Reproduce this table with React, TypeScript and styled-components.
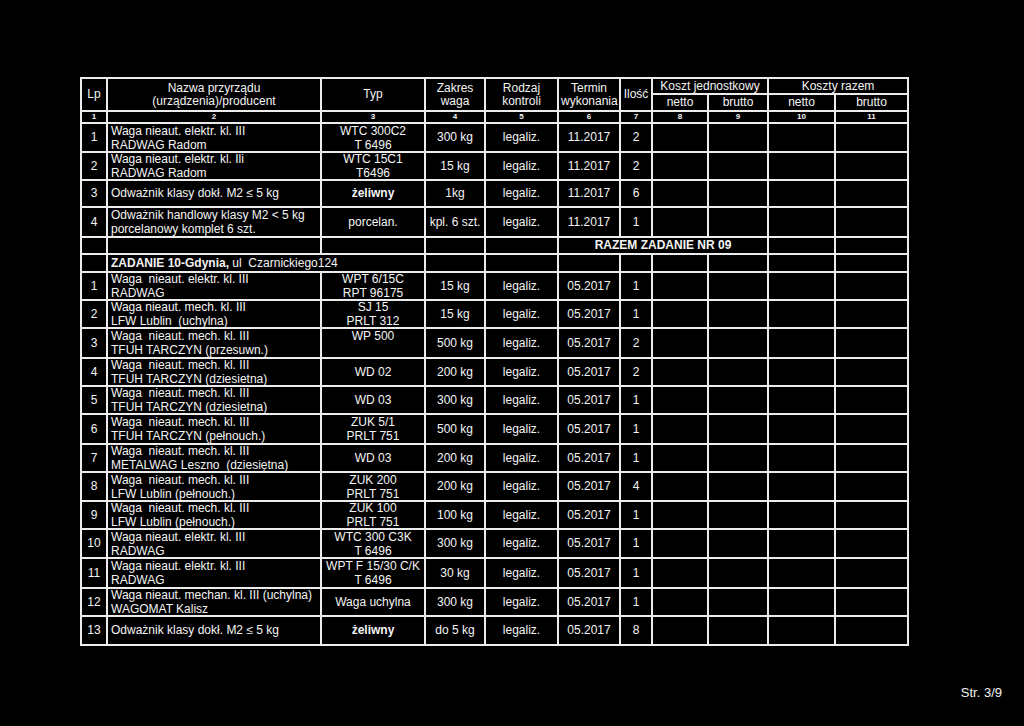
import React from "react";
import styled, { createGlobalStyle } from "styled-components";

const Global = createGlobalStyle`
  html, body { margin: 0; padding: 0; background: #000; }
  body { font-family: "Liberation Sans", Arial, sans-serif; color: #f4f4f4; }
`;

const Page = styled.div`
  width: 1024px;
  height: 726px;
  box-sizing: border-box;
  padding: 77px 0 0 80px;
  background: #000;
  display: flex;
  flex-direction: column;
`;

const Sheet = styled.table`
  border-collapse: collapse;
  table-layout: fixed;
  width: 827px;
  font-size: 12px;
  line-height: 13px;
  color: #f4f4f4;
  td, th { border: 2px solid #ececec; }
`;

const Row = styled.tr<{ $h: number }>`
  height: ${(p) => p.$h}px;
`;

const HeadCell = styled.th`
  font-weight: normal;
  font-size: 12px;
  line-height: 13px;
  text-align: center;
  vertical-align: middle;
  padding: 0 2px;
  white-space: nowrap;
`;

const NumCell = styled.td`
  font-size: 8px;
  line-height: 8px;
  font-weight: bold;
  text-align: center;
  padding: 0;
`;

const Cell = styled.td<{ $align?: "left" | "center"; $bold?: boolean }>`
  text-align: ${(p) => p.$align ?? "center"};
  font-weight: ${(p) => (p.$bold ? "bold" : "normal")};
  vertical-align: middle;
  padding: 0 ${(p) => (p.$align === "left" ? "3px" : "1px")};
  white-space: pre;
  overflow: visible;
`;

const LineStack = styled.div`
  margin: -1px 0;
`;

const Line = styled.div`
  height: 14px;
  line-height: 14px;
  white-space: pre;
`;

const SectionText = styled.span`
  font-weight: bold;
`;

const Footer = styled.div`
  margin-top: 39px;
  padding-right: 22px;
  text-align: right;
  font-size: 13px;
  color: #f4f4f4;
`;

type Item = {
  lp: string;
  name: string[];
  typ: string[];
  typBold?: boolean;
  zakres: string;
  termin: string;
  ilosc: string;
  h: number;
};

const block1: Item[] = [
  { lp: "1", name: ["Waga nieaut. elektr. kl. III", "RADWAG Radom"], typ: ["WTC 300C2", "T 6496"], zakres: "300 kg", termin: "11.2017", ilosc: "2", h: 29 },
  { lp: "2", name: ["Waga nieaut. elektr. kl. Ili", "RADWAG Radom"], typ: ["WTC 15C1", "T6496"], zakres: "15 kg", termin: "11.2017", ilosc: "2", h: 27 },
  { lp: "3", name: ["Odważnik klasy dokł. M2 ≤ 5 kg"], typ: ["żeliwny"], typBold: true, zakres: "1kg", termin: "11.2017", ilosc: "6", h: 27 },
  { lp: "4", name: ["Odważnik handlowy klasy M2 < 5 kg", "porcelanowy komplet 6 szt."], typ: ["porcelan."], zakres: "kpl. 6 szt.", termin: "11.2017", ilosc: "1", h: 30 },
];

const block2: Item[] = [
  { lp: "1", name: ["Waga  nieaut. elektr. kl. III", "RADWAG"], typ: ["WPT 6/15C", "RPT 96175"], zakres: "15 kg", termin: "05.2017", ilosc: "1", h: 28 },
  { lp: "2", name: ["Waga nieaut. mech. kl. III", "LFW Lublin  (uchylna)"], typ: ["SJ 15", "PRLT 312"], zakres: "15 kg", termin: "05.2017", ilosc: "1", h: 28 },
  { lp: "3", name: ["Waga  nieaut. mech. kl. III", "TFUH TARCZYN (przesuwn.)"], typ: ["WP 500", ""], zakres: "500 kg", termin: "05.2017", ilosc: "2", h: 30 },
  { lp: "4", name: ["Waga  nieaut. mech. kl. III", "TFUH TARCZYN (dziesietna)"], typ: ["WD 02"], zakres: "200 kg", termin: "05.2017", ilosc: "2", h: 28 },
  { lp: "5", name: ["Waga  nieaut. mech. kl. III", "TFUH TARCZYN (dziesietna)"], typ: ["WD 03"], zakres: "300 kg", termin: "05.2017", ilosc: "1", h: 27 },
  { lp: "6", name: ["Waga  nieaut. mech. kl. III", "TFUH TARCZYN (pełnouch.)"], typ: ["ZUK 5/1", "PRLT 751"], zakres: "500 kg", termin: "05.2017", ilosc: "1", h: 30 },
  { lp: "7", name: ["Waga  nieaut. mech. kl. III", "METALWAG Leszno  (dziesiętna)"], typ: ["WD 03"], zakres: "200 kg", termin: "05.2017", ilosc: "1", h: 28 },
  { lp: "8", name: ["Waga  nieaut. mech. kl. III", "LFW Lublin (pełnouch.)"], typ: ["ZUK 200", "PRLT 751"], zakres: "200 kg", termin: "05.2017", ilosc: "4", h: 29 },
  { lp: "9", name: ["Waga  nieaut. mech. kl. III", "LFW Lublin (pełnouch.)"], typ: ["ZUK 100", "PRLT 751"], zakres: "100 kg", termin: "05.2017", ilosc: "1", h: 28 },
  { lp: "10", name: ["Waga nieaut. elektr. kl. III", "RADWAG"], typ: ["WTC 300 C3K", "T 6496"], zakres: "300 kg", termin: "05.2017", ilosc: "1", h: 29 },
  { lp: "11", name: ["Waga nieaut. elektr. kl. III", "RADWAG"], typ: ["WPT F 15/30 C/K", "T 6496"], zakres: "30 kg", termin: "05.2017", ilosc: "1", h: 30 },
  { lp: "12", name: ["Waga nieaut. mechan. kl. III (uchylna)", "WAGOMAT Kalisz"], typ: ["Waga uchylna"], zakres: "300 kg", termin: "05.2017", ilosc: "1", h: 28 },
  { lp: "13", name: ["Odważnik klasy dokł. M2 ≤ 5 kg"], typ: ["żeliwny"], typBold: true, zakres: "do 5 kg", termin: "05.2017", ilosc: "8", h: 29 },
];

const widths = [26, 214, 104, 60, 73, 62, 32, 56, 60, 67, 73];

const Lines = ({ lines }: { lines: string[] }) =>
  lines.length === 1 ? (
    <>{lines[0]}</>
  ) : (
    <LineStack>
      {lines.map((l, i) => (
        <Line key={i}>{l}</Line>
      ))}
    </LineStack>
  );

const ItemRow = ({ it }: { it: Item }) => (
  <Row $h={it.h}>
    <Cell>{it.lp}</Cell>
    <Cell $align="left">
      <Lines lines={it.name} />
    </Cell>
    <Cell $bold={it.typBold}>
      <Lines lines={it.typ} />
    </Cell>
    <Cell>{it.zakres}</Cell>
    <Cell>legaliz.</Cell>
    <Cell>{it.termin}</Cell>
    <Cell>{it.ilosc}</Cell>
    <Cell />
    <Cell />
    <Cell />
    <Cell />
  </Row>
);

export default function App() {
  return (
    <>
      <Global />
      <Page>
        <Sheet>
          <colgroup>
            {widths.map((w, i) => (
              <col key={i} style={{ width: w }} />
            ))}
          </colgroup>
          <tbody>
            <Row $h={16}>
              <HeadCell rowSpan={2}>Lp</HeadCell>
              <HeadCell rowSpan={2}>
                Nazwa przyrządu
                <br />
                (urządzenia)/producent
              </HeadCell>
              <HeadCell rowSpan={2}>Typ</HeadCell>
              <HeadCell rowSpan={2}>
                Zakres
                <br />
                waga
              </HeadCell>
              <HeadCell rowSpan={2}>
                Rodzaj
                <br />
                kontroli
              </HeadCell>
              <HeadCell rowSpan={2}>
                Termin
                <br />
                wykonania
              </HeadCell>
              <HeadCell rowSpan={2}>Ilość</HeadCell>
              <HeadCell colSpan={2}>Koszt jednostkowy</HeadCell>
              <HeadCell colSpan={2}>Koszty razem</HeadCell>
            </Row>
            <Row $h={17}>
              <HeadCell>netto</HeadCell>
              <HeadCell>brutto</HeadCell>
              <HeadCell>netto</HeadCell>
              <HeadCell>brutto</HeadCell>
            </Row>
            <Row $h={12}>
              {widths.map((_, i) => (
                <NumCell key={i}>{i + 1}</NumCell>
              ))}
            </Row>
            {block1.map((it, i) => (
              <ItemRow key={"a" + i} it={it} />
            ))}
            <Row $h={17}>
              <Cell />
              <Cell />
              <Cell />
              <Cell />
              <Cell />
              <Cell colSpan={4} $bold>
                RAZEM ZADANIE NR 09
              </Cell>
              <Cell />
              <Cell />
            </Row>
            <Row $h={18}>
              <Cell />
              <Cell colSpan={2} $align="left">
                <SectionText>ZADANIE 10-Gdynia,</SectionText> ul  Czarnickiego124
              </Cell>
              <Cell />
              <Cell />
              <Cell />
              <Cell />
              <Cell />
              <Cell />
              <Cell />
              <Cell />
            </Row>
            {block2.map((it, i) => (
              <ItemRow key={"b" + i} it={it} />
            ))}
          </tbody>
        </Sheet>
        <Footer>Str. 3/9</Footer>
      </Page>
    </>
  );
}
